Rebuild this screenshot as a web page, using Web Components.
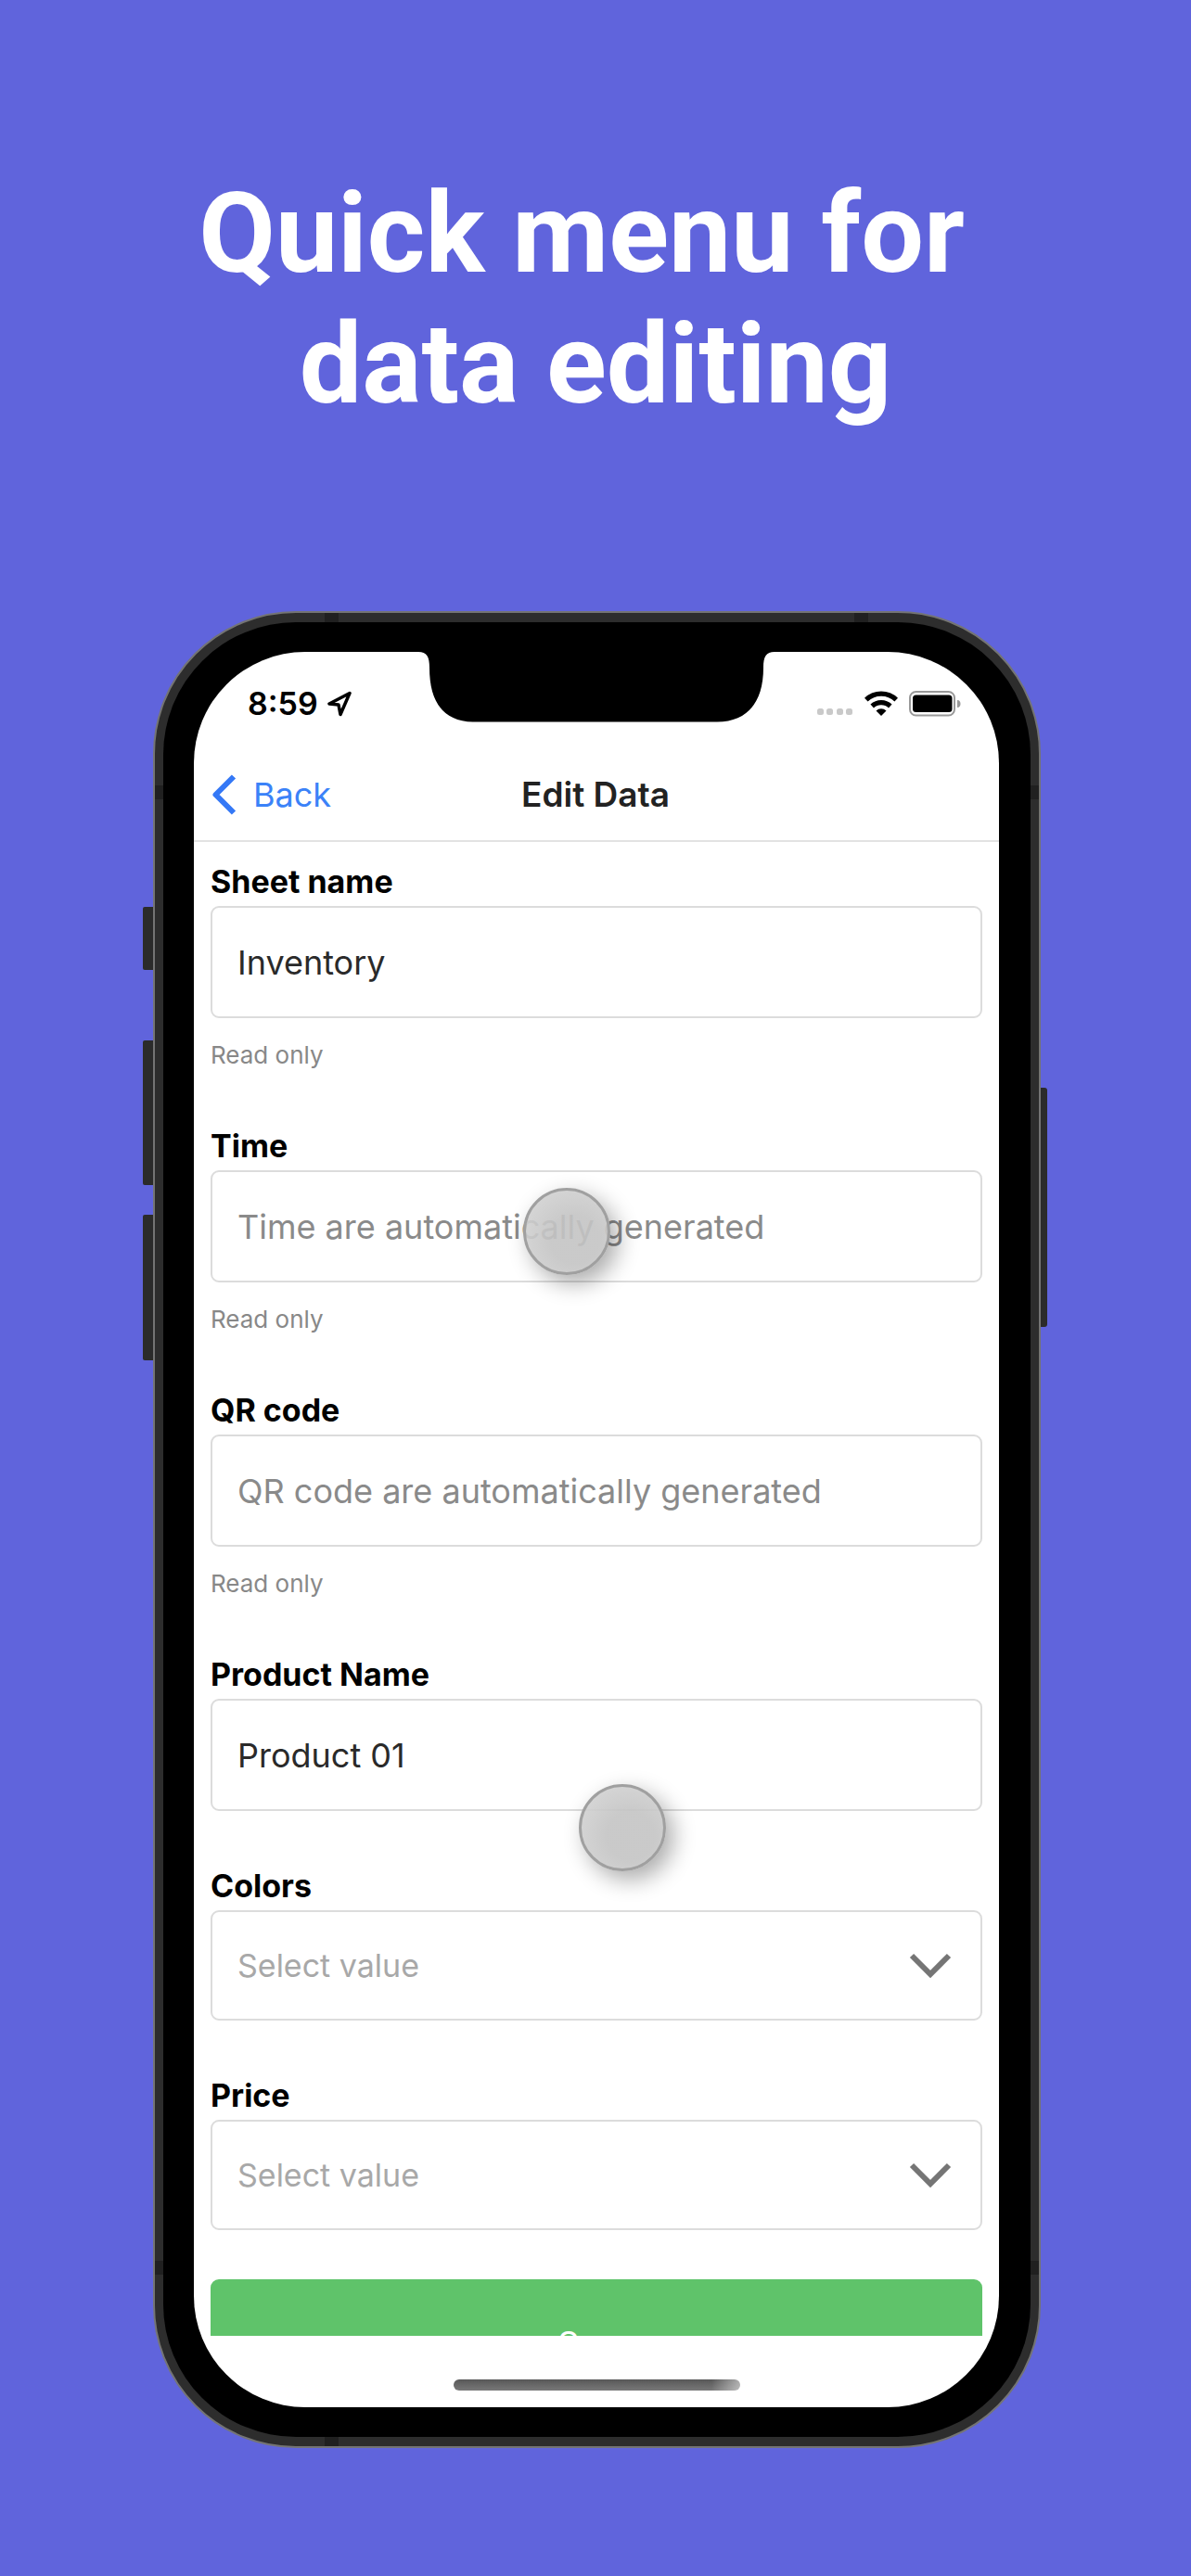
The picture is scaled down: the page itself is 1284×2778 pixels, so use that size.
<!DOCTYPE html>
<html lang="en">
<head>
<meta charset="utf-8">
<meta name="viewport" content="width=device-width, initial-scale=1">
<title>Quick menu for data editing</title>
<style>
  body { margin: 0; min-height: 100vh; background: #6064dc; font-family: Inter, "Liberation Sans", sans-serif; }
</style>
</head>
<body>
<promo-page>
  <promo-title slot="title">Quick menu for 
data editing</promo-title>
  <phone-frame>
    <status-bar time="8:59"></status-bar>
    <nav-bar heading="Edit Data" back="Back"></nav-bar>
    <edit-form>
      <text-field label="Sheet name" value="Inventory" hint="Read only" readonly></text-field>
      <text-field label="Time" placeholder="Time are automatically generated" hint="Read only" readonly></text-field>
      <text-field label="QR code" placeholder="QR code are automatically generated" hint="Read only" readonly></text-field>
      <text-field label="Product Name" value="Product 01"></text-field>
      <select-field label="Colors" placeholder="Select value"></select-field>
      <select-field label="Price" placeholder="Select value"></select-field>
      <save-button>Save</save-button>
    </edit-form>
    <home-indicator></home-indicator>
    <touch-point slot="overlay" style="--x: 45.5%; --y: 33%"></touch-point>
    <touch-point slot="overlay" style="--x: 52.4%; --y: 67%"></touch-point>
  </phone-frame>
</promo-page>

<script>
function define(name, render) {
  customElements.define(name, class extends HTMLElement {
    constructor() {
      super();
      this.attachShadow({ mode: 'open' });
    }
    connectedCallback() {
      const t = document.createElement('template');
      t.innerHTML = render(this);
      this.shadowRoot.replaceChildren(t.content.cloneNode(true));
    }
  });
}
const attr = (el, name) => el.getAttribute(name) || '';

define('promo-page', () => `
  <style>
    :host { display: flex; flex-direction: column; gap: 195px; padding: 182px 0 138px; }
    main { padding: 0 162px 0 165px; }
  </style>
  <slot name="title"></slot>
  <main><slot></slot></main>`);

define('promo-title', () => `
  <style>
    :host { display: block; }
    h1 { margin: 0; font: 700 120px/141px Roboto, sans-serif; color: #fff; text-align: center; white-space: pre; }
  </style>
  <h1><slot></slot></h1>`);

define('phone-frame', () => `
  <style>
    :host { display: block; position: relative; }
    .key { position: absolute; width: 11px; background: #2b2b2b; border-radius: 2px 0 0 2px; left: -11px; }
    .mute { top: 319px; height: 68px; }
    .up { top: 463px; height: 156px; }
    .down { top: 651px; height: 157px; }
    .power { left: auto; right: -7px; width: 8px; top: 514px; height: 258px; border-radius: 0 3px 3px 0; }
    .body { position: relative; border: 2px solid #747474; border-radius: 154px; padding: 10px 9px; background: #2d2d2d; }
    .band { position: absolute; background: #202020; }
    .band.h { width: 15px; height: 10px; }
    .band.v { width: 9px; height: 15px; }
    .bezel { background: #000; border-radius: 143px; padding: 32px 34px 32px 33px; }
    .screen { position: relative; display: flex; flex-direction: column; aspect-ratio: 868 / 1893; min-height: 0; background: #fff; border-radius: 120px; overflow: hidden; }
    .notch { position: absolute; top: 0; left: 50%; width: 384px; height: 76px; margin-left: -192px; }
  </style>
  <span class="key mute"></span><span class="key up"></span><span class="key down"></span><span class="key power"></span>
  <div class="body">
    <span class="band h" style="top:0;left:183px"></span><span class="band h" style="top:0;right:184px"></span>
    <span class="band h" style="bottom:0;left:183px"></span>
    <span class="band v" style="top:186px;left:0"></span><span class="band v" style="top:186px;right:0"></span>
    <span class="band v" style="bottom:185px;left:0"></span><span class="band v" style="bottom:185px;right:0"></span>
    <div class="bezel">
      <div class="screen">
        <slot></slot>
        <svg class="notch" viewBox="0 0 384 76" aria-hidden="true"><path d="M0 0C9 0 12 5 12 17C12 54 27 75.500 60 75.500H322C355 75.500 372 54 372 17C372 5 375 0 384 0Z"/></svg>
        <slot name="overlay"></slot>
      </div>
    </div>
  </div>`);

define('status-bar', el => `
  <style>
    :host { display: flex; align-items: center; justify-content: space-between; height: 104px; box-sizing: border-box; padding: 7px 41px 0 58px; flex: none; }
    div { display: flex; align-items: center; gap: 11px; }
    .clock { gap: 9px; }
    time { font-size: 34px; line-height: 42px; font-weight: 600; color: #000; }
    svg { display: block; }
  </style>
  <div class="clock">
    <time>${attr(el, 'time')}</time>
    <svg width="28" height="28" viewBox="0 0 28 28" fill="none" stroke="#000" stroke-width="3.500" stroke-linejoin="round"><path d="M25 2.500L3 14L13 15L15 25.500Z"/></svg>
  </div>
  <div>
    <svg width="40" height="28" viewBox="0 0 40 28" fill="#c9c9c9"><rect x="1" y="19" width="7" height="7" rx="2.500"/><rect x="11" y="19" width="7" height="7" rx="2.500"/><rect x="22" y="19" width="7" height="7" rx="2.500"/><rect x="32" y="19" width="7" height="7" rx="2.500"/></svg>
    <svg width="38" height="28" viewBox="0 0 38 28"><g fill="none" stroke="#000" stroke-width="5.200"><path d="M2.800 9.600A23.500 23.500 0 0 1 35.200 9.600"/><path d="M9.200 16.500A14.400 14.400 0 0 1 28.800 16.500"/></g><path d="M13.500 21.400A8.200 8.200 0 0 1 24.500 21.400L19 27Z"/></svg>
    <svg width="56" height="28" viewBox="0 0 56 28"><rect x="1" y="1" width="48" height="25.500" rx="6.500" fill="none" stroke="#999" stroke-width="2"/><rect x="4" y="4.500" width="42.500" height="18.500" rx="3.500"/><path d="M52 10c2.500 0 3.500 2 3.500 4s-1 4-3.500 4z" fill="#999"/></svg>
  </div>`);

define('nav-bar', el => `
  <style>
    :host { display: grid; grid-template-columns: 1fr auto 1fr; align-items: center; height: 101px; box-sizing: border-box; padding: 0 20px 0 18px; border-bottom: 2px solid #e2e2e2; flex: none; }
    button { justify-self: start; display: flex; align-items: center; gap: 18px; padding: 0; border: 0; background: none; font: 400 36px/44px Inter, sans-serif; color: #3b82f8; }
    h2 { margin: 0; font-size: 37px; line-height: 44px; font-weight: 600; color: #222; }
    svg { display: block; }
  </style>
  <button type="button"><svg width="28" height="44" viewBox="0 0 28 44" fill="none" stroke="#3478f6" stroke-width="6" stroke-linejoin="round"><path d="M25 2.500L5.500 22L25 41.500"/></svg>${attr(el, 'back')}</button>
  <h2>${attr(el, 'heading')}</h2>`);

define('edit-form', () => `
  <style>
    :host { display: block; flex: 1; min-height: 0; overflow: hidden; }
    form { display: flex; flex-direction: column; gap: 60px; padding: 22px 18px 0; }
  </style>
  <form><slot></slot></form>`);

const fieldStyles = `
    :host { display: flex; flex-direction: column; }
    label { font-size: 34px; line-height: 42px; font-weight: 700; color: #000; margin-bottom: 5px; }
    input, select { box-sizing: border-box; width: 100%; margin: 0; padding: 0 27px; border: 2px solid #dcdcdc; border-radius: 9px; background: #fff; font: 400 36px/44px Inter, sans-serif; color: #2a2a2a; outline: 0; }`;

define('text-field', el => `
  <style>${fieldStyles}
    input { height: 121px; }
    input::placeholder { color: #8a8a8a; opacity: 1; }
    small { margin-top: 22px; font-size: 26px; line-height: 35px; color: #888; }
  </style>
  <label for="f">${attr(el, 'label')}</label>
  <input id="f" type="text" value="${attr(el, 'value')}" placeholder="${attr(el, 'placeholder')}" ${el.hasAttribute('readonly') ? 'readonly' : ''}>
  ${el.hasAttribute('hint') ? `<small>${attr(el, 'hint')}</small>` : ''}`);

define('select-field', el => `
  <style>${fieldStyles}
    .box { display: grid; align-items: center; }
    select, svg { grid-area: 1 / 1; }
    select { height: 119px; appearance: none; font-size: 34px; color: #a8a8a8; }
    svg { justify-self: end; margin-right: 33px; pointer-events: none; }
  </style>
  <label for="f">${attr(el, 'label')}</label>
  <div class="box">
    <select id="f"><option>${attr(el, 'placeholder')}</option></select>
    <svg width="46" height="28" viewBox="0 0 46 28" fill="none" stroke="#757575" stroke-width="6"><path d="M3 3L23 23L43 3"/></svg>
  </div>`);

define('save-button', () => `
  <style>
    :host { display: block; margin-top: -7px; }
    button { display: block; width: 100%; height: 138px; border: 0; border-radius: 9px; background: #5fc36a; color: #fff; font: 400 36px/44px Inter, sans-serif; }
  </style>
  <button type="button"><slot></slot></button>`);

define('home-indicator', () => `
  <style>
    :host { display: flex; justify-content: center; align-items: flex-start; height: 77px; box-sizing: border-box; padding-top: 47px; flex: none; }
    span { width: 309px; height: 12px; border-radius: 6px; background: linear-gradient(90deg, transparent 90%, rgba(255,255,255,.5)), linear-gradient(#585858, #787878); }
  </style>
  <span></span>`);

define('touch-point', () => `
  <style>
    :host { position: absolute; left: var(--x); top: var(--y); margin: -47px 0 0 -40px; box-sizing: border-box; width: 94px; height: 94px; border-radius: 50%; border: 3px solid #a0a0a0; background: radial-gradient(circle at 60% 60%, rgba(196,196,196,.9) 35%, rgba(208,208,208,.9) 75%); box-shadow: 8px 9px 24px rgba(0,0,0,.33); }
  </style>`);
</script>
</body>
</html>
